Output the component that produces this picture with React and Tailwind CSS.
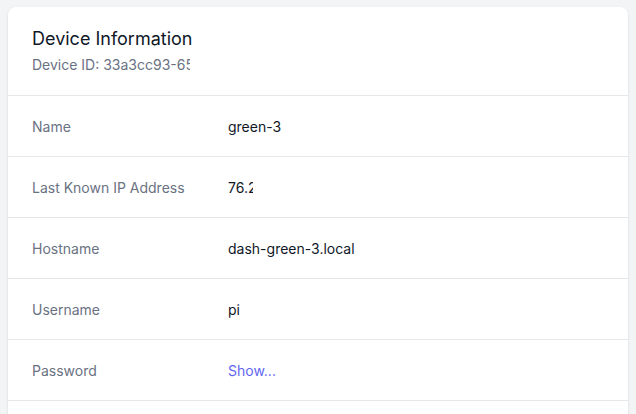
import React from "react";

const rows = [
  { label: "Name", value: <span>green-3</span> },
  {
    label: "Last Known IP Address",
    value: (
      <span className="inline-block w-[25px] overflow-hidden whitespace-nowrap align-top">
        76.230.14.102
      </span>
    ),
  },
  { label: "Hostname", value: <span>dash-green-3.local</span> },
  { label: "Username", value: <span>pi</span> },
  {
    label: "Password",
    value: <a className="text-[#6366f1] cursor-pointer">Show...</a>,
  },
  { label: "", value: <span></span> },
];

export default function App() {
  return (
    <div
      className="min-h-[414px] h-[414px] overflow-hidden bg-[#f3f4f6] px-2 pt-[7px]"
      style={{ fontFamily: "Inter, 'Noto Sans', sans-serif" }}
    >
      <div className="bg-white rounded-lg shadow overflow-hidden">
        <div className="px-6 py-5">
          <h3 className="text-lg leading-6 font-normal text-gray-900">
            Device Information
          </h3>
          <p className="mt-1 text-sm leading-5 text-gray-500">
            <span className="inline-block w-[158px] overflow-hidden whitespace-nowrap align-top">
              Device ID: 33a3cc93-6512-4c2a-9f1e-7b3d0a1c2e44
            </span>
          </p>
        </div>
        <dl>
          {rows.map((r, i) => (
            <div
              key={i}
              className="grid grid-cols-3 gap-4 px-6 py-5 border-t border-gray-200"
            >
              <dt className="text-sm leading-5 text-gray-500 h-5 pt-px">{r.label}</dt>
              <dd className="text-sm leading-5 text-gray-900 col-span-2 h-5 pt-px">
                {r.value}
              </dd>
            </div>
          ))}
        </dl>
      </div>
    </div>
  );
}
